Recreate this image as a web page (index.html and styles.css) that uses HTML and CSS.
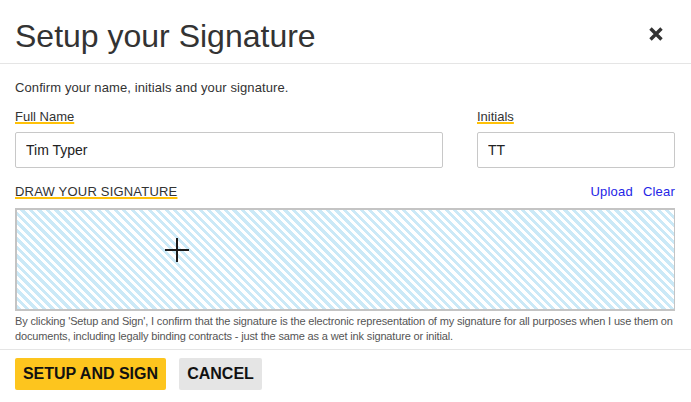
FILE: index.html
```html
<!DOCTYPE html>
<html lang="en">
<head>
<meta charset="utf-8">
<title>Setup your Signature</title>
<link rel="stylesheet" href="styles.css">
</head>
<body>
<div class="modal">
  <header class="modal-header">
    <h1 class="title">Setup your Signature</h1>
    <button class="close" aria-label="Close">
      <svg width="16" height="16" viewBox="0 0 16 16"><path d="M2.5 2.5 L13.5 13.5 M13.5 2.5 L2.5 13.5" stroke="#333" stroke-width="3.4" stroke-linecap="butt" fill="none"/></svg>
    </button>
  </header>
  <section class="modal-body">
    <p class="intro">Confirm your name, initials and your signature.</p>
    <div class="fields">
      <div class="field field-name">
        <label class="label"><span class="ul">Full Name</span></label>
        <input class="input" type="text" value="Tim Typer">
      </div>
      <div class="field field-initials">
        <label class="label"><span class="ul">Initials</span></label>
        <input class="input" type="text" value="TT">
      </div>
    </div>
    <div class="sig-head">
      <span class="label ul sig-label">DRAW YOUR SIGNATURE</span>
      <div class="sig-links"><a href="#">Upload</a><a href="#">Clear</a></div>
    </div>
    <div class="sig-pad">
      <span class="cross"></span>
    </div>
    <p class="disclaimer">By clicking 'Setup and Sign', I confirm that the signature is the electronic representation of my signature for all purposes when I use them on documents, including legally binding contracts - just the same as a wet ink signature or initial.</p>
  </section>
  <footer class="modal-footer">
    <button class="btn btn-primary">SETUP AND SIGN</button>
    <button class="btn btn-secondary">CANCEL</button>
  </footer>
</div>
</body>
</html>
```

FILE: styles.css
```css
* { box-sizing: border-box; }
html, body { margin: 0; padding: 0; background: #fff; }
body {
  font-family: "Liberation Sans", Arial, sans-serif;
  color: #333;
  width: 691px;
  height: 402px;
  overflow: hidden;
}
.modal-header {
  display: flex;
  align-items: flex-start;
  justify-content: space-between;
  padding: 18px 27px 9px 15px;
  border-bottom: 1px solid #e5e5e5;
  height: 64px;
}
.title {
  margin: 0;
  font-size: 32px;
  line-height: 36px;
  font-weight: normal;
  color: #333;
}
.close {
  border: 0;
  background: none;
  padding: 0;
  margin-top: 8px;
  width: 16px;
  height: 16px;
  display: block;
  cursor: pointer;
}
.close svg { display: block; }
.modal-body {
  padding: 16px 16px 0 15px;
}
.intro {
  margin: 0;
  font-size: 13px;
  line-height: 16px;
  color: #333;
  letter-spacing: 0.1px;
}
.fields {
  display: flex;
  gap: 34px;
  margin-top: 13px;
}
.field { display: flex; flex-direction: column; }
.field-name { width: 428px; }
.field-initials { flex: 1; }
.label {
  font-size: 13px;
  line-height: 16px;
  color: #333;
  display: block;
}
.sig-label { letter-spacing: 0.2px; }
.ul {
  text-decoration: underline;
  text-decoration-color: #ffc107;
  text-decoration-thickness: 2px;
  text-underline-offset: 1px;
}
.input {
  margin-top: 7px;
  height: 36px;
  border: 1px solid #c8c8c8;
  border-radius: 2px;
  padding: 0 10px;
  font-family: "Liberation Sans", Arial, sans-serif;
  font-size: 14px;
  color: #222;
  background: #fff;
  width: 100%;
}
.sig-head {
  display: flex;
  justify-content: space-between;
  align-items: baseline;
  margin-top: 16px;
  line-height: 16px;
}
.sig-links { display: flex; gap: 10px; font-size: 13px; letter-spacing: 0.2px; }
.sig-links a { color: #2525e6; text-decoration: none; }
.sig-pad {
  position: relative;
  margin-top: 8px;
  height: 103px;
  border: 2px solid #c4c4c4;
  border-right-width: 1px;
  border-bottom-width: 2px;
  background: repeating-linear-gradient(45deg, #cbe9f7 0 3px, #ffffff 3px 6px);
}
.cross {
  position: absolute;
  left: 148px;
  top: 28px;
  width: 24px;
  height: 24px;
}
.cross::before, .cross::after {
  content: "";
  position: absolute;
  background: #1a1a1a;
}
.cross::before { left: 11px; top: 0; width: 2px; height: 24px; }
.cross::after { top: 11px; left: 0; height: 2px; width: 24px; }
.disclaimer {
  margin: 3px 0 0;
  font-size: 11px;
  line-height: 15px;
  color: #555;
  letter-spacing: -0.15px;
  padding-bottom: 5px;
}
.modal-footer {
  border-top: 1px solid #e5e5e5;
  padding: 8px 15px;
  display: flex;
  gap: 13px;
}
.btn {
  height: 32px;
  border: 0;
  border-radius: 2px;
  font-family: "Liberation Sans", Arial, sans-serif;
  font-weight: bold;
  font-size: 16px;
  color: #111;
  padding: 0;
  white-space: nowrap;
  text-align: center;
  cursor: pointer;
}
.btn-primary { background: #fdc51e; width: 151px; }
.btn-secondary { background: #e5e5e5; width: 83px; }
```
